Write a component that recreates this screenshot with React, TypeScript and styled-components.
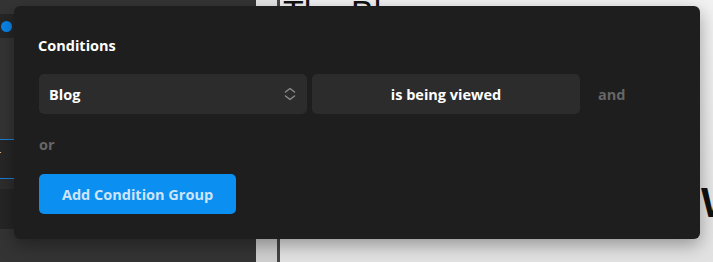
import styled, { createGlobalStyle } from 'styled-components';

const GlobalStyle = createGlobalStyle`
    html, body {
        margin: 0;
        padding: 0;
        width: 713px;
        height: 262px;
        overflow: hidden;
        font-family: 'Open Sans', 'Liberation Sans', sans-serif;
    }
`;

const Screen = styled.div`
    position: relative;
    width: 713px;
    height: 262px;
    display: grid;
    grid-template-columns: 256px 21px 3px 1fr;
    overflow: hidden;
`;

const Sidebar = styled.div`
    background: #343434;
    display: flex;
    flex-direction: column;
    padding-top: 14px;
`;

const StatusPill = styled.div`
    width: 40px;
    height: 24px;
    border-radius: 0 12px 12px 0;
    background: #262626;
    display: flex;
    align-items: center;
    padding-left: 1px;
`;

const Dot = styled.span`
    width: 11px;
    height: 11px;
    border-radius: 50%;
    background: #0a84e6;
`;

const SideItem = styled.div<{ active?: boolean }>`
    height: ${(p) => (p.active ? '38px' : '40px')};
    background: ${(p) => (p.active ? '#262626' : '#252525')};
    border-top: ${(p) => (p.active ? '1px solid #1a7fd6' : 'none')};
    border-bottom: ${(p) => (p.active ? '1px solid #1a7fd6' : 'none')};
    color: #eee;
    font-size: 12px;
    line-height: 30px;
    text-indent: -4px;
    overflow: hidden;
`;

const SideSpacer = styled.div<{ h: number; bg: string }>`
    height: ${(p) => p.h}px;
    background: ${(p) => p.bg};
`;

const Gutter = styled.div`
    background: linear-gradient(#e6e6e6, #cfcfcf);
`;

const Divider = styled.div`
    background: #444;
`;

const Canvas = styled.div`
    background: linear-gradient(#f2f2f2, #e2e2e2);
    padding-left: 3px;
    font-family: 'Liberation Sans', sans-serif;
    color: #111;
`;

const PageTitle = styled.h1`
    margin: -8px 0 0;
    font-size: 34px;
    font-weight: 400;
    line-height: 40px;
`;

const PageText = styled.div`
    margin: 146px 0 0 418px;
    font-size: 42px;
    font-weight: 700;
    line-height: 50px;
    white-space: nowrap;
`;

const Modal = styled.div`
    position: absolute;
    left: 14px;
    top: 6px;
    width: 686px;
    height: 233px;
    box-sizing: border-box;
    background: #1e1e1e;
    border-radius: 6px;
    box-shadow: 0 6px 18px rgba(0, 0, 0, 0.35);
    padding: 30px 24px 24px 25px;
    display: flex;
    flex-direction: column;
    align-items: flex-start;
`;

const Title = styled.div`
    color: #fff;
    font-size: 14.5px;
    font-weight: 700;
    line-height: 20px;
    margin-left: -1px;
    margin-bottom: 18px;
`;

const Row = styled.div`
    display: flex;
    align-items: center;
    gap: 5px;
`;

const Field = styled.div<{ center?: boolean }>`
    width: 268px;
    height: 40px;
    box-sizing: border-box;
    background: #2c2c2c;
    border-radius: 5px;
    display: flex;
    align-items: center;
    justify-content: ${(p) => (p.center ? 'center' : 'space-between')};
    padding: 0 10px;
    color: #fff;
    font-size: 14.5px;
    font-weight: 700;
`;

const Joiner = styled.span`
    color: #666;
    font-size: 14.5px;
    font-weight: 700;
    margin-left: 13px;
`;

const OrLabel = styled(Joiner)`
    margin: 21px 0 19px;
    line-height: 20px;
`;

const PrimaryButton = styled.button`
    width: 197px;
    height: 40px;
    border: none;
    border-radius: 5px;
    background: #0b8ff0;
    color: #cde5fb;
    font-family: inherit;
    font-size: 14.5px;
    font-weight: 700;
    padding: 0;
`;

const Chevrons = () => (
    <svg width="14" height="16" viewBox="0 0 14 16" fill="none" stroke="#8a8a8a" strokeWidth="1.5" strokeLinecap="round" strokeLinejoin="round">
        <path d="M2.5 6 7 2.5 11.5 6" />
        <path d="M2.5 10 7 13.5 11.5 10" />
    </svg>
);

export default function App() {
    return (
        <>
            <GlobalStyle />
            <Screen>
                <Sidebar>
                    <StatusPill>
                        <Dot />
                    </StatusPill>
                    <SideSpacer h={101} bg="#343434" />
                    <SideItem active>r</SideItem>
                    <SideSpacer h={10} bg="#2d2d2d" />
                    <SideItem />
                </Sidebar>
                <Gutter />
                <Divider />
                <Canvas>
                    <PageTitle>The Blog</PageTitle>
                    <PageText>Welcome</PageText>
                </Canvas>

                <Modal>
                    <Title>Conditions</Title>
                    <Row>
                        <Field>
                            Blog
                            <Chevrons />
                        </Field>
                        <Field center>is being viewed</Field>
                        <Joiner>and</Joiner>
                    </Row>
                    <OrLabel>or</OrLabel>
                    <PrimaryButton>Add Condition Group</PrimaryButton>
                </Modal>
            </Screen>
        </>
    );
}
